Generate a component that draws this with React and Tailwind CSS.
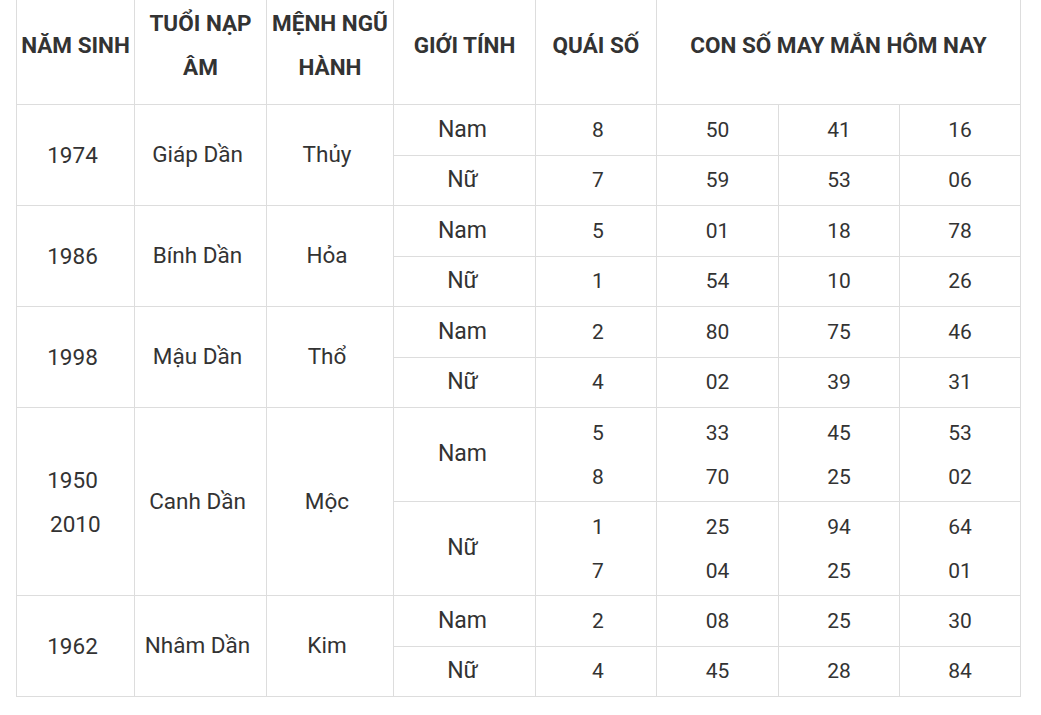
const rows = [
  {
    year: ["1974"], tuoi: "Giáp Dần", menh: "Thủy",
    sub: [
      { gt: "Nam", qs: ["8"], n: [["50"], ["41"], ["16"]] },
      { gt: "Nữ", qs: ["7"], n: [["59"], ["53"], ["06"]] },
    ],
  },
  {
    year: ["1986"], tuoi: "Bính Dần", menh: "Hỏa",
    sub: [
      { gt: "Nam", qs: ["5"], n: [["01"], ["18"], ["78"]] },
      { gt: "Nữ", qs: ["1"], n: [["54"], ["10"], ["26"]] },
    ],
  },
  {
    year: ["1998"], tuoi: "Mậu Dần", menh: "Thổ",
    sub: [
      { gt: "Nam", qs: ["2"], n: [["80"], ["75"], ["46"]] },
      { gt: "Nữ", qs: ["4"], n: [["02"], ["39"], ["31"]] },
    ],
  },
  {
    year: ["1950", "\u00a02010"], tuoi: "Canh Dần", menh: "Mộc",
    sub: [
      { gt: "Nam", qs: ["5", "8"], n: [["33", "70"], ["45", "25"], ["53", "02"]] },
      { gt: "Nữ", qs: ["1", "7"], n: [["25", "04"], ["94", "25"], ["64", "01"]] },
    ],
  },
  {
    year: ["1962"], tuoi: "Nhâm Dần", menh: "Kim",
    sub: [
      { gt: "Nam", qs: ["2"], n: [["08"], ["25"], ["30"]] },
      { gt: "Nữ", qs: ["4"], n: [["45"], ["28"], ["84"]] },
    ],
  },
]

const td = "border border-[#dddddd] text-center align-middle py-0"

function Lines({ items }) {
  return (
    <div className="flex flex-col items-center">
      {items.map((t, i) => (
        <span key={i} className="inline-block leading-[44px] whitespace-pre">
          {t}
        </span>
      ))}
    </div>
  )
}

export default function App() {
  return (
    <div
      className="w-[1041px] h-[715px] overflow-hidden bg-white text-[#333333]"
      style={{ fontFamily: "Roboto, 'Noto Sans', sans-serif" }}
    >
      <table className="ml-[16px] mt-[-12px] w-[1004px] table-fixed border-collapse text-[22.5px]">
        <colgroup>
          <col className="w-[118px]" />
          <col className="w-[132px]" />
          <col className="w-[127px]" />
          <col className="w-[142px]" />
          <col className="w-[121px]" />
          <col className="w-[122px]" />
          <col className="w-[121px]" />
          <col className="w-[121px]" />
        </colgroup>
        <thead>
          <tr className="h-[116px] font-bold text-[22.5px] leading-[44px]">
            <th className={td + " px-1 pb-[4px]"}>NĂM SINH</th>
            <th className={td + " px-1 pb-[4px]"}>TUỔI NẠP ÂM</th>
            <th className={td + " px-1 pb-[4px]"}>MỆNH NGŨ HÀNH</th>
            <th className={td + " px-1 pb-[4px]"}>GIỚI TÍNH</th>
            <th className={td + " px-1 pb-[4px]"}>QUÁI SỐ</th>
            <th className={td + " px-1 pb-[4px] whitespace-nowrap"} colSpan={3}>CON SỐ MAY MẮN HÔM NAY</th>
          </tr>
        </thead>
        <tbody>
          {rows.map((r, ri) =>
            r.sub.map((s, si) => {
              const double = s.qs.length > 1
              return (
                <tr key={ri + "-" + si} className={double ? "h-[94px]" : "h-[50.5px]"}>
                  {si === 0 && (
                    <>
                      <td className={td + " pl-[1px] pr-[7px]"} rowSpan={2}><Lines items={r.year} /></td>
                      <td className={td + " pl-[1px] pr-[7px]"} rowSpan={2}>{r.tuoi}</td>
                      <td className={td + " pl-[1px] pr-[7px]"} rowSpan={2}>{r.menh}</td>
                    </>
                  )}
                  <td className={td + " pl-[2px] pr-[6px] text-[23px]"}>{s.gt}</td>
                  <td className={td + " pl-[8px] pr-[4px] text-[21px]"}><Lines items={s.qs} /></td>
                  {s.n.map((col, ci) => (
                    <td key={ci} className={td + " px-1 text-[21px]"}><Lines items={col} /></td>
                  ))}
                </tr>
              )
            })
          )}
        </tbody>
      </table>
    </div>
  )
}
